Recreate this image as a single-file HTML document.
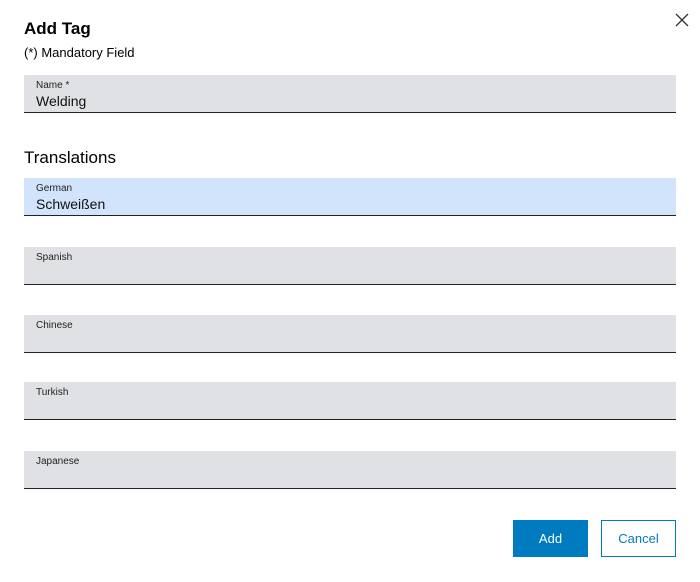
<!DOCTYPE html>
<html><head><style>
body{margin:0;width:700px;height:582px;background:#fff;font-family:"Liberation Sans",sans-serif;color:#000;position:relative;overflow:hidden}
.a{position:absolute}
.f{position:absolute;left:24px;width:652px;height:37px;background:#e0e1e4;border-bottom:1.5px solid #222}
.f .l{position:absolute;left:12px;top:5px;font-size:10px;color:#222}
.f .v{position:absolute;left:12px;top:18px;font-size:14px;color:#111}
</style></head><body>
<div class="a" style="left:24px;top:19px;font-size:17px;font-weight:bold">Add Tag</div>
<div class="a" style="left:24px;top:45px;font-size:13px">(*) Mandatory Field</div>
<svg class="a" style="left:675px;top:13px" width="14" height="14"><path d="M1 1L13 13M13 1L1 13" stroke="#333" stroke-width="1.3"/></svg>
<div class="f" style="top:75px"><div class="l">Name *</div><div class="v">Welding</div></div>
<div class="a" style="left:24px;top:148px;font-size:17px">Translations</div>
<div class="f" style="top:178px;background:#d1e4fb"><div class="l">German</div><div class="v">Schweißen</div></div>
<div class="f" style="top:247px"><div class="l">Spanish</div></div>
<div class="f" style="top:315px"><div class="l">Chinese</div></div>
<div class="f" style="top:382px"><div class="l">Turkish</div></div>
<div class="f" style="top:451px"><div class="l">Japanese</div></div>
<div class="a" style="left:513px;top:520px;width:75px;height:37px;background:#007bc0;color:#fff;font-size:13px;text-align:center;line-height:37px">Add</div>
<div class="a" style="left:601px;top:520px;width:73px;height:35px;border:1px solid #007bc0;color:#007bc0;font-size:13px;text-align:center;line-height:35px">Cancel</div>
</body></html>
